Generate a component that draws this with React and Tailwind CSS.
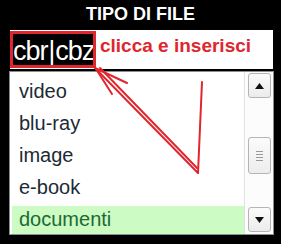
import React from "react";

const items = ["video", "blu-ray", "image", "e-book", "documenti"];

function ScrollBtn({ up }) {
  return (
    <div className="w-[23px] h-[25px] mx-auto rounded-[3px] border border-[#b4b4b4] bg-gradient-to-b from-[#fbfbfb] to-[#ececec] flex items-center justify-center">
      <svg width="9" height="6" viewBox="0 0 9 6">
        {up ? <polygon points="0,6 9,6 4.5,0" fill="#111" /> : <polygon points="0,0 9,0 4.5,6" fill="#111" />}
      </svg>
    </div>
  );
}

export default function App() {
  return (
    <div className="relative w-[281px] h-[244px] bg-black overflow-hidden" style={{ fontFamily: '"Liberation Sans", Arial, sans-serif' }}>
      <div className="h-[28px] text-center text-white font-bold text-[18px] leading-[28px]">TIPO DI FILE</div>
      <div className="mt-[2px] ml-[10px] w-[263px] h-[39px] bg-white flex items-start">
        <div className="mt-[1px] w-[86px] h-[37px] border-[3px] border-[#e0262e] bg-black text-white text-[27px] leading-[28px] pt-[3px] tracking-[-1px] whitespace-nowrap overflow-hidden">
          cbr<span className="font-[DejaVu_Sans] text-[26px]">|</span>cbz
        </div>
        <div className="ml-[4px] mt-[5px] text-[19px] leading-[22px] font-bold text-[#e0262e] whitespace-nowrap">clicca e inserisci</div>
      </div>
      <div className="mt-[2px] ml-[9px] w-[265px] h-[164px] border border-[#8a8d92] bg-white flex">
        <div className="flex-1 pl-[2px] pt-[6px] overflow-hidden">
          {items.map((t) => (
            <div
              key={t}
              className={
                "h-[32px] pl-[7px] text-[20px] leading-[26px] " +
                (t === "documenti" ? "bg-[#ccfcc4] text-[#1d6a31]" : "text-[#1c2a36]")
              }
            >
              {t}
            </div>
          ))}
        </div>
        <div className="w-[29px] border-l border-[#e2e2e2] bg-[#fcfcfc] flex flex-col pt-[1px] pb-[2px]">
          <ScrollBtn up />
          <div className="mt-[39px] w-[23px] h-[37px] mx-auto rounded-[3px] border border-[#b4b4b4] bg-gradient-to-b from-[#fbfbfb] to-[#ededed] flex flex-col items-center justify-center gap-[2px]">
            <div className="w-[7px] h-px bg-[#9a9a9a]" />
            <div className="w-[7px] h-px bg-[#9a9a9a]" />
            <div className="w-[7px] h-px bg-[#9a9a9a]" />
            <div className="w-[7px] h-px bg-[#9a9a9a]" />
          </div>
          <div className="flex-1" />
          <ScrollBtn />
        </div>
      </div>
      <svg className="absolute inset-0 pointer-events-none" width="281" height="244" viewBox="0 0 281 244">
        <g stroke="#e0262e" strokeWidth="2" fill="none" strokeLinecap="round">
          <line x1="95" y1="68" x2="198" y2="173" />
          <line x1="100" y1="68" x2="197" y2="168" />
          <line x1="95" y1="68" x2="127" y2="83" />
          <line x1="96" y1="69" x2="112" y2="94" />
          <line x1="202" y1="82" x2="198" y2="173" />
        </g>
      </svg>
    </div>
  );
}
